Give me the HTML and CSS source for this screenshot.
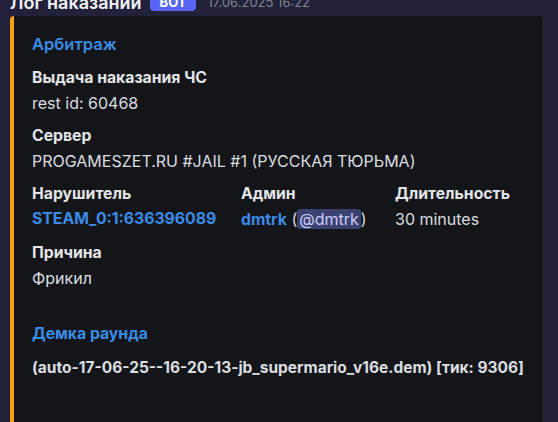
FILE: index.html
```html
<!DOCTYPE html>
<html lang="ru">
<head>
<meta charset="utf-8">
<link rel="stylesheet" href="styles.css">
</head>
<body>
<div class="msg">
  <div class="header">
    <span class="author">Лог наказаний</span>
    <span class="badge">BOT</span>
    <span class="time">17.06.2025 16:22</span>
  </div>
  <div class="embed">
    <div class="title">Арбитраж</div>
    <div class="fields">
      <div class="field full">
        <div class="fname">Выдача наказания ЧС</div>
        <div class="fvalue">rest id: 60468</div>
      </div>
      <div class="field full">
        <div class="fname">Сервер</div>
        <div class="fvalue">PROGAMESZET.RU #JAIL #1 (РУССКАЯ ТЮРЬМА)</div>
      </div>
      <div class="inline-row">
        <div class="field">
          <div class="fname">Нарушитель</div>
          <div class="fvalue link">STEAM_0:1:636396089</div>
        </div>
        <div class="field">
          <div class="fname">Админ</div>
          <div class="fvalue"><span class="link">dmtrk</span> (<span class="mention">@dmtrk</span>)</div>
        </div>
        <div class="field">
          <div class="fname">Длительность</div>
          <div class="fvalue">30 minutes</div>
        </div>
      </div>
      <div class="field full">
        <div class="fname">Причина</div>
        <div class="fvalue">Фрикил</div>
      </div>
      <div class="field full demo">
        <div class="fname link">Демка раунда</div>
        <div class="fvalue strong">(auto-17-06-25--16-20-13-jb_supermario_v16e.dem) [тик: 9306]</div>
      </div>
    </div>
  </div>
</div>
</body>
</html>
```

FILE: styles.css
```css
html, body {
  margin: 0;
  padding: 0;
  background: #21223a;
  height: 100%;
  overflow: hidden;
}
body {
  font-family: Inter, "Noto Sans", sans-serif;
  color: #dbdee1;
}
.msg {
  padding: 0 0 0 10px;
}
.header {
  display: flex;
  align-items: center;
  height: 16px;
  margin-top: -6px;
  white-space: nowrap;
}
.author {
  font-size: 18px;
  font-weight: 600;
  color: #f2f3f5;
}
.badge {
  background: #5865f2;
  color: #fff;
  font-size: 13px;
  font-weight: 700;
  border-radius: 4px;
  padding: 1px 10px;
  margin-left: 8px;
}
.time {
  font-size: 13px;
  color: #80848e;
  margin-left: 11px;
}
.embed {
  margin-top: 6px;
  width: 533px;
  height: 420px;
  background: #141518;
  border-left: 4px solid #f7a30f;
  border-radius: 4px;
  box-shadow: 1px 0 0 #2a2b30;
  padding: 34px 16px 0 18px;
  box-sizing: border-box;
}
.title {
  font-size: 16.5px;
  font-weight: 600;
  color: #3b8ce6;
  line-height: 20px;
  margin-top: -16px;
  margin-bottom: 13px;
}
.fields {
  display: flex;
  flex-direction: column;
  gap: 11px;
}
.fname {
  font-size: 15.75px;
  font-weight: 700;
  line-height: 22px;
  margin-bottom: 3px;
  color: #e3e5e8;
}
.fvalue {
  font-size: 16px;
  line-height: 22px;
  color: #dbdee1;
}
.link {
  color: #3b8ce6;
  font-weight: 700;
  font-size: 15.75px;
}
.strong {
  font-weight: 700;
  font-size: 15.5px;
}
.inline-row {
  display: grid;
  grid-template-columns: 209px 154px auto;
}
.mention {
  background: #3c4270;
  color: #c9cdfb;
  border-radius: 3px;
  padding: 0 2px;
}
.demo {
  margin-top: 23px;
}
.demo .fname {
  color: #3b8ce6;
  margin-bottom: 12px;
}
```
